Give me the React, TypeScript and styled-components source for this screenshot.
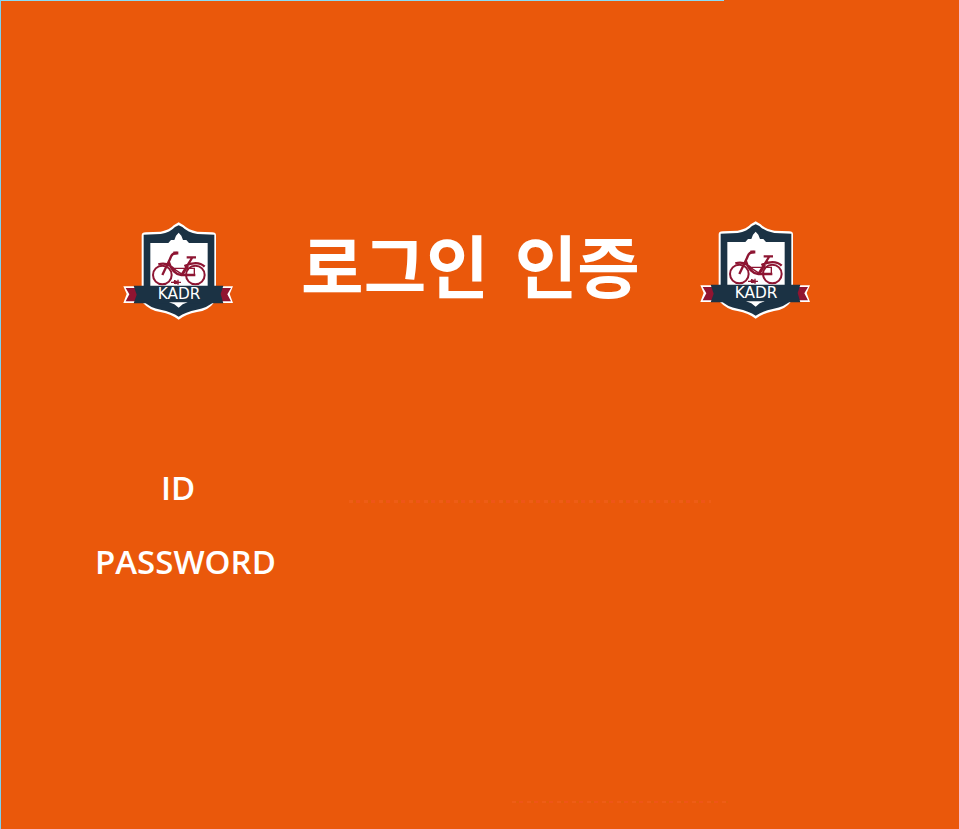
import React from "react";
import styled, { createGlobalStyle } from "styled-components";

const GlobalStyle = createGlobalStyle`
  *, *::before, *::after { box-sizing: border-box; }
  body { margin: 0; background: #ea580b; }
`;

const speckle =
  "repeating-linear-gradient(90deg, #ee5d16 0 4px, #e35c08 4px 7px, #ef5518 7px 11px, #ea580b 11px 15px)";

const Page = styled.main`
  display: flex;
  flex-direction: column;
  min-height: 100vh;
  padding: 221px 0 26px 94px;
  color: #fff;
  background:
    linear-gradient(#8adcf8, #8adcf8) 0 0 / 723px 1px no-repeat,
    #ea580b;
  border-left: 1px solid #7ed0f0;
`;

const Header = styled.header`
  display: flex;
  align-items: flex-start;
  padding-left: 28px;
`;

const Emblem = styled.svg<{ $drop?: boolean }>`
  flex: none;
  width: 110px;
  height: 98px;
  margin-top: ${(p) => (p.$drop ? 1 : 0)}px;
`;

const Title = styled.h1`
  flex: none;
  display: flex;
  justify-content: center;
  gap: 26px;
  width: 467px;
  margin: 0;
  padding-left: 8px;
  white-space: nowrap;
  font: 700 68px/86px "Noto Sans CJK KR", sans-serif;
`;

const Form = styled.form`
  display: grid;
  grid-template-columns: 180px minmax(0, 436px);
  row-gap: 26px;
  margin-top: 144px;
`;

const Label = styled.label<{ $center?: boolean }>`
  font: 600 33px/48px "Open Sans", sans-serif;
  white-space: nowrap;
  padding-left: ${(p) => (p.$center ? 66 : 0)}px;
`;

const Field = styled.input<{ $ruled?: boolean }>`
  min-width: 0;
  height: 48px;
  padding: 0 16px;
  border: 0;
  outline: 0;
  background: ${(p) => (p.$ruled ? `${speckle} 74px 36px / 362px 3px no-repeat` : "transparent")};
  color: #fff;
  font: 400 24px/32px "Open Sans", "Noto Sans CJK KR", sans-serif;
`;

const FooterRule = styled.hr`
  width: 216px;
  height: 2px;
  margin: auto 0 0 417px;
  border: 0;
  background: ${speckle};
`;

function KadrEmblem({ drop }: { drop?: boolean }) {
  return (
    <Emblem $drop={drop} viewBox="24 20 330 294" role="img" aria-label="KADR">
      <path d="M25 213H80V60Q80 51 92 51L137 49Q164 44 176 30L191 21L206 30Q220 44 247 49L292 51Q303 51 303 60V213H354L344 236L354 263H296Q280 286 246 290Q212 297 191 313Q170 297 136 290Q105 286 84 263H25L35 236Z" fill="#fff" />
      <path d="M32 218H68V258H32L43 237ZM314 218H348L337 237L348 258H314Z" fill="#901431" />
      <path d="M86 58L137 56Q166 51 180 35L191 30L202 35Q218 51 247 56L298 58V258Q276 279 245 283Q211 290 191 304Q171 290 137 283Q106 279 86 258Z" fill="#1b3244" />
      <path d="M106 83H160L168 74H178L183 61L191 52L199 61L204 74H214L222 83H278V213H106Z" fill="#fff" />
      <path d="M56 211H325L317 236L325 264H56L65 238Z" fill="#1b3244" />
      <path d="M162 261H218L203 267L191 277L178 267Z" fill="#fff" />
      <g fill="none" stroke="#8d1532">
        <circle cx="142" cy="179" r="28" strokeWidth="6" />
        <circle cx="241" cy="179" r="28" strokeWidth="6" />
        <path d="M142 179L166 129Q170 113 186 113M162 141Q172 176 199 179L231 128M130 147Q160 138 180 166M215 126H243M199 179H241M208 152Q248 134 269 154" strokeWidth="7" />
        <path d="M175 113H190" strokeWidth="9" />
        <path d="M176 159H238V178M174 159L203 178M220 152L204 178" strokeWidth="4" />
        <path d="M168 201H198M179 194V206M189 193V208" strokeWidth="4" />
      </g>
      <path d="M172 201L182 195L195 202L182 207Z" fill="#8d1532" />
      <text x="192" y="252" fill="#fff" fontFamily="DejaVu Sans, sans-serif" fontSize="46" textAnchor="middle">KADR</text>
    </Emblem>
  );
}

export default function App() {
  return (
    <>
      <GlobalStyle />
      <Page>
        <Header>
          <KadrEmblem drop />
          <Title>
            <span>로그인</span> <span>인증</span>
          </Title>
          <KadrEmblem />
        </Header>
        <Form>
          <Label htmlFor="user-id" $center>ID</Label>
          <Field id="user-id" name="id" autoComplete="username" $ruled />
          <Label htmlFor="password">PASSWORD</Label>
          <Field id="password" name="password" type="password" autoComplete="current-password" />
        </Form>
        <FooterRule />
      </Page>
    </>
  );
}
